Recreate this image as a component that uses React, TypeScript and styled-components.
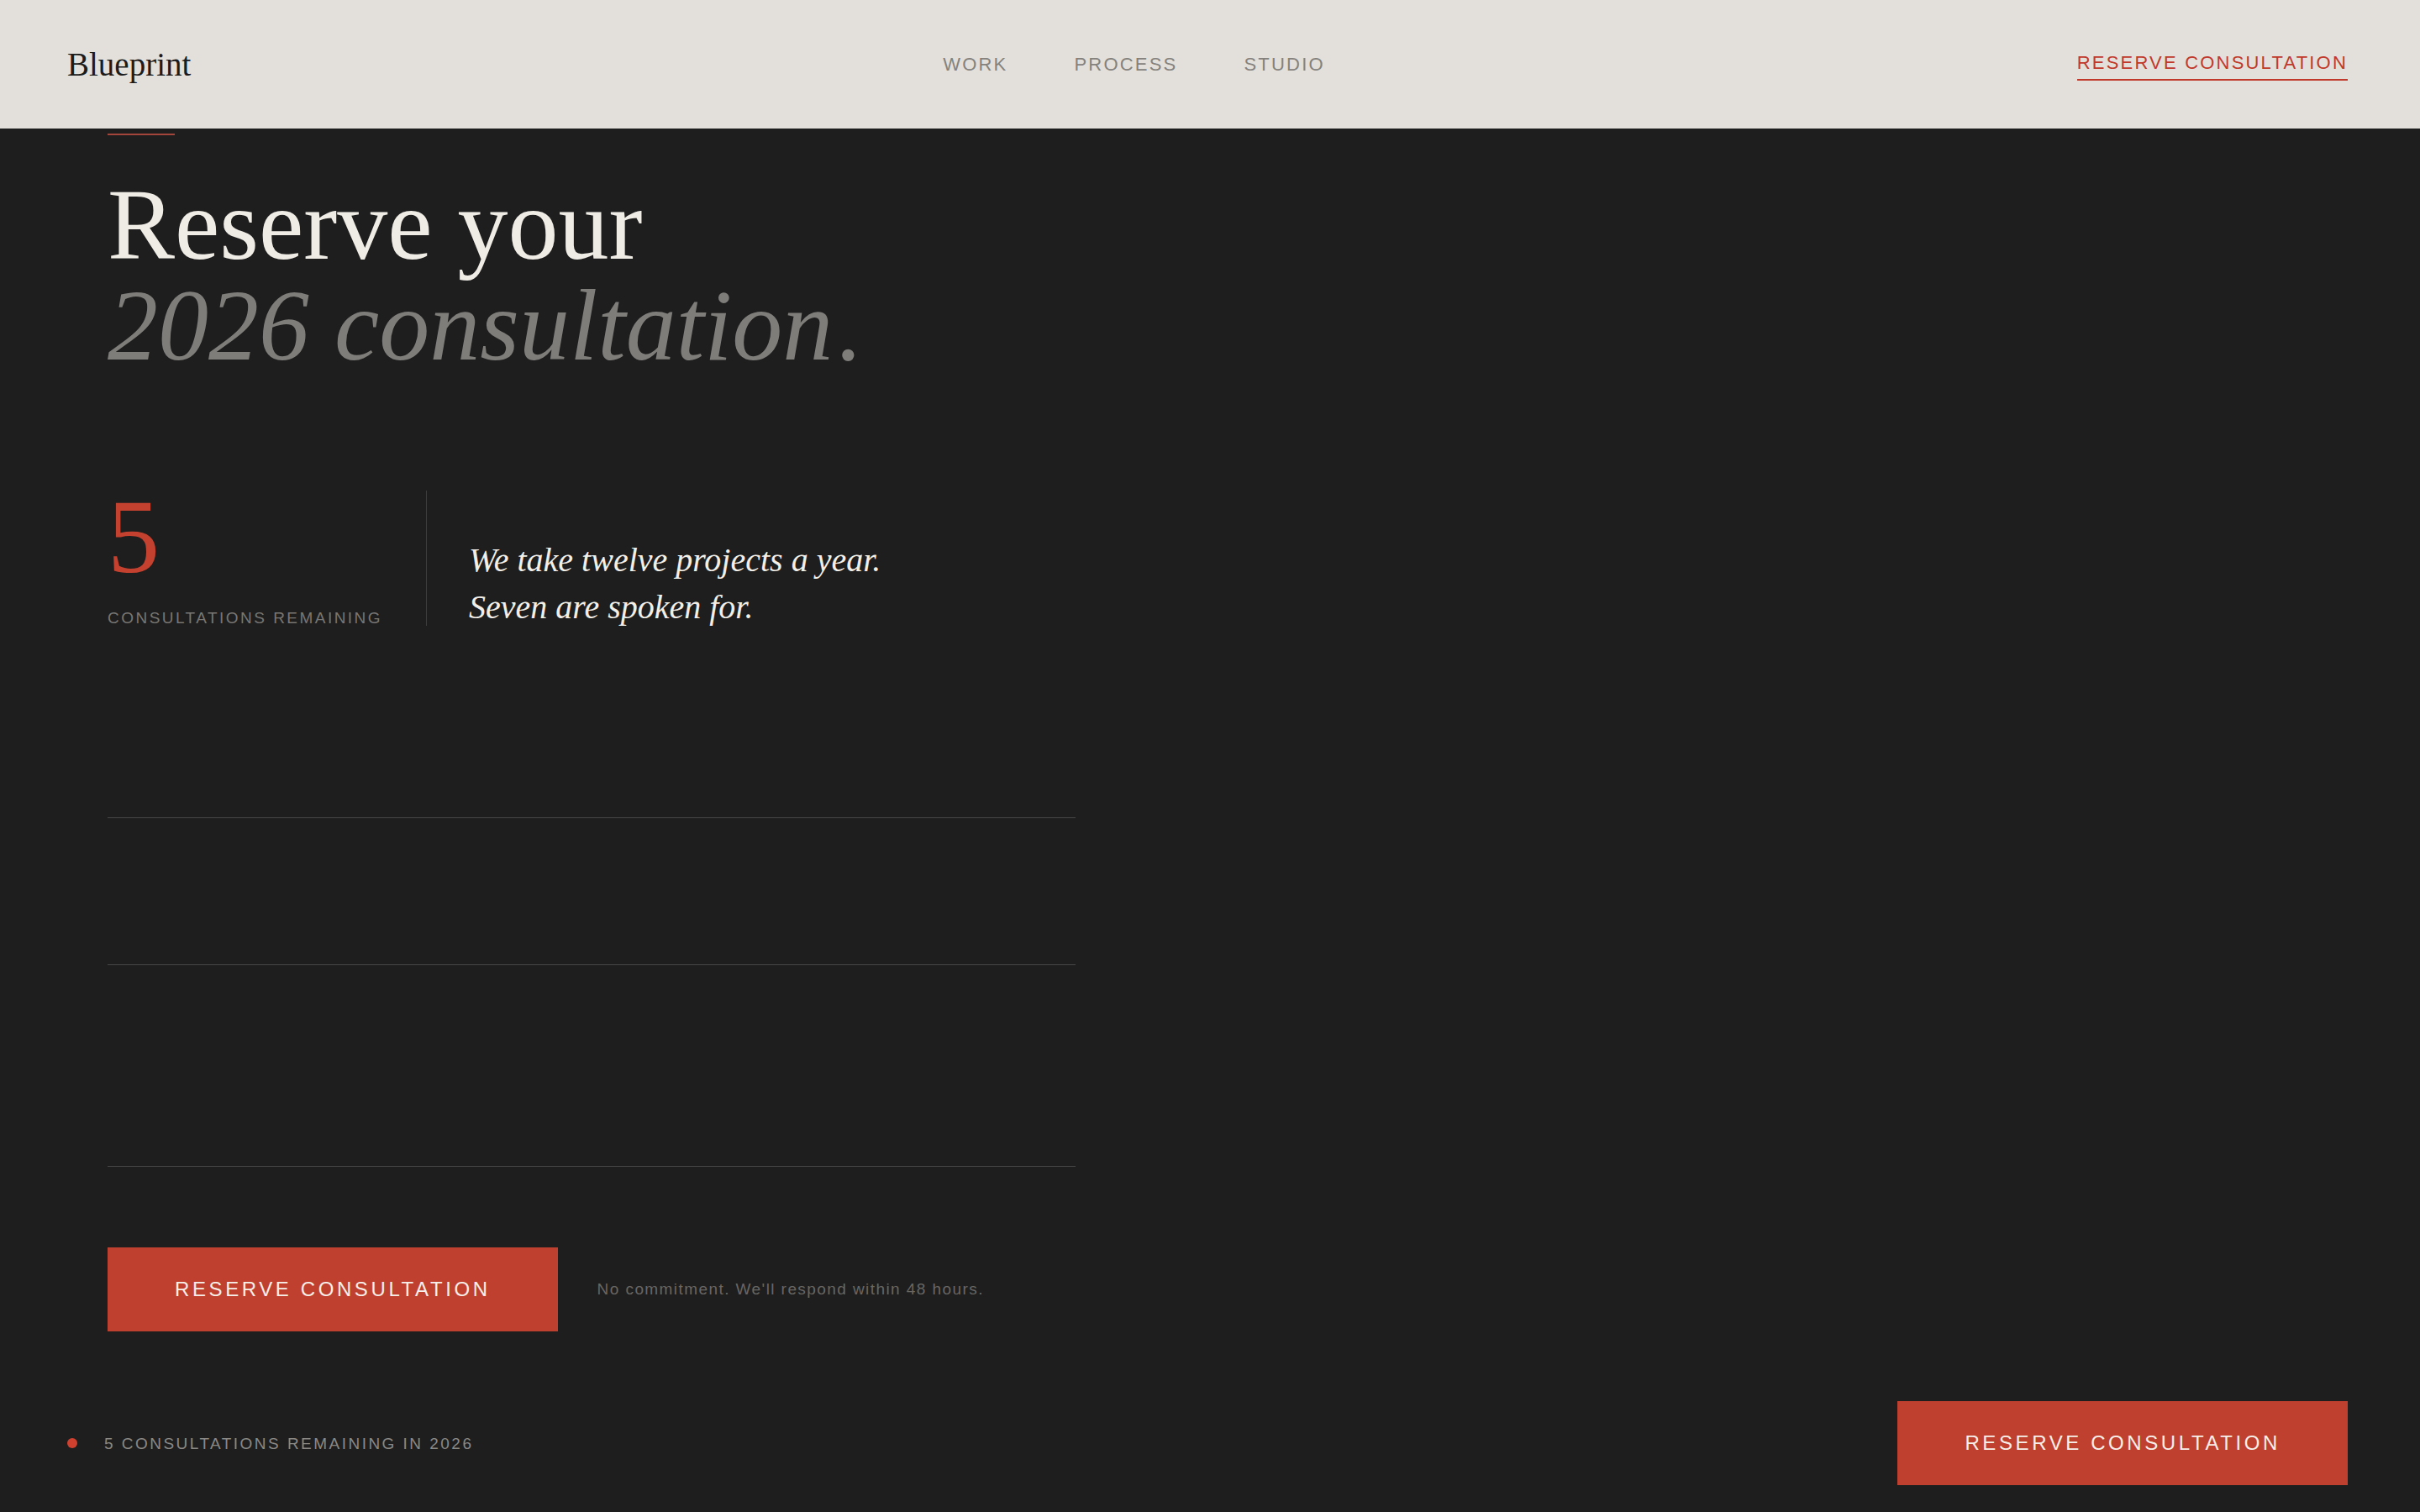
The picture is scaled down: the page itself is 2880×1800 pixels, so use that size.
import React from "react";
import styled, { createGlobalStyle } from "styled-components";

const serif = `"Liberation Serif", "Times New Roman", serif`;
const sans = `"Liberation Sans", Arial, sans-serif`;

const GlobalStyle = createGlobalStyle`
  html, body {
    margin: 0;
    padding: 0;
    background: #1e1e1e;
  }
  * {
    box-sizing: border-box;
  }
`;

const Page = styled.div`
  min-height: 100vh;
  display: flex;
  flex-direction: column;
  background: #1e1e1e;
`;

const Header = styled.header`
  height: 153px;
  flex-shrink: 0;
  display: flex;
  align-items: center;
  justify-content: space-between;
  padding: 0 86px 0 80px;
  background: #e3e0db;
`;

const Logo = styled.div`
  font-family: ${serif};
  font-size: 39px;
  line-height: 1;
  color: #1c1c1c;
`;

const Nav = styled.nav`
  display: flex;
  gap: 79px;
`;

const NavLink = styled.a`
  font-family: ${sans};
  font-size: 22px;
  line-height: 1;
  letter-spacing: 0.1em;
  color: #85827d;
  text-decoration: none;
`;

const HeaderCta = styled.a`
  display: inline-block;
  margin-top: 6px;
  padding-bottom: 8px;
  border-bottom: 2px solid #c0392b;
  font-family: ${sans};
  font-size: 22px;
  line-height: 22px;
  letter-spacing: 0.1em;
  color: #c0392b;
  text-decoration: none;
`;

const Main = styled.main`
  flex: 1;
  padding: 6px 86px 0 128px;
`;

const AccentLine = styled.div`
  width: 80px;
  height: 2px;
  background: #a4453c;
  margin-bottom: 47px;
`;

const Headline = styled.h1`
  margin: 0;
  font-family: ${serif};
  font-weight: 400;
  font-size: 120px;
  line-height: 1;
  color: #efebe5;

  em {
    display: block;
    color: #7f7d7a;
  }

  span {
    margin-left: 6px;
  }
`;

const StatsRow = styled.div`
  margin-top: 136px;
  display: flex;
  align-items: flex-end;
`;

const StatBlock = styled.div`
  display: flex;
  flex-direction: column;
  padding-right: 52px;
  border-right: 1px solid #3d3d3d;
`;

const StatNumber = styled.div`
  font-family: ${serif};
  font-size: 124px;
  line-height: 0.9;
  color: #c4402f;
`;

const SmallCaps = styled.div<{ $color?: string; $spacing?: string }>`
  font-family: ${sans};
  font-size: 19px;
  line-height: 1;
  letter-spacing: ${(p) => p.$spacing || "0.13em"};
  color: ${(p) => p.$color || "#787672"};
  text-transform: uppercase;
`;

const StatLabel = styled(SmallCaps)`
  margin-top: 30px;
`;

const Quote = styled.p`
  margin: 0 0 -6px 0;
  padding-left: 50px;
  font-family: ${serif};
  font-style: italic;
  font-size: 40px;
  line-height: 56px;
  color: #f2eee8;
`;

const Form = styled.form`
  margin-top: 101px;
  width: 1152px;
  display: flex;
  flex-direction: column;
  gap: 47px;
`;

const Field = styled.label<{ $height: number }>`
  display: flex;
  height: ${(p) => p.$height}px;
  border-bottom: 1px solid #474747;
`;

const Input = styled.input`
  flex: 1;
  align-self: flex-end;
  height: 60px;
  background: transparent;
  border: none;
  outline: none;
  font-family: ${serif};
  font-size: 32px;
  color: #efebe5;
`;

const TextArea = styled.textarea`
  flex: 1;
  align-self: flex-end;
  height: 120px;
  background: transparent;
  border: none;
  outline: none;
  resize: none;
  font-family: ${serif};
  font-size: 32px;
  color: #efebe5;
`;

const Actions = styled.div`
  margin-top: 96px;
  display: flex;
  align-items: center;
  gap: 47px;
`;

const Button = styled.button`
  height: 100px;
  padding: 0 80px;
  background: #c0402f;
  border: none;
  border-radius: 0;
  font-family: ${sans};
  font-size: 24px;
  letter-spacing: 0.15em;
  color: #f6eee8;
  cursor: pointer;
  white-space: nowrap;
`;

const Note = styled.span`
  font-family: ${sans};
  font-size: 19px;
  letter-spacing: 0.075em;
  color: #686663;
`;

const BottomBar = styled.footer`
  flex-shrink: 0;
  display: flex;
  align-items: center;
  justify-content: space-between;
  padding: 32px 86px 32px 80px;
`;

const Availability = styled.div`
  display: flex;
  align-items: center;
  gap: 32px;
`;

const Dot = styled.span`
  width: 12px;
  height: 12px;
  border-radius: 50%;
  background: #d0402f;
`;

export default function App() {
  return (
    <>
      <GlobalStyle />
      <Page>
        <Header>
          <Logo>Blueprint</Logo>
          <Nav>
            <NavLink href="#work">WORK</NavLink>
            <NavLink href="#process">PROCESS</NavLink>
            <NavLink href="#studio">STUDIO</NavLink>
          </Nav>
          <HeaderCta href="#reserve">RESERVE CONSULTATION</HeaderCta>
        </Header>

        <Main>
          <AccentLine />
          <Headline>
            Reserve your
            <em>
              2026 consultation<span>.</span>
            </em>
          </Headline>

          <StatsRow>
            <StatBlock>
              <StatNumber>5</StatNumber>
              <StatLabel>Consultations remaining</StatLabel>
            </StatBlock>
            <Quote>
              We take twelve projects a year.
              <br />
              Seven are spoken for.
            </Quote>
          </StatsRow>

          <Form onSubmit={(e) => e.preventDefault()}>
            <Field $height={128}>
              <Input type="text" aria-label="Name" />
            </Field>
            <Field $height={128}>
              <Input type="email" aria-label="Email" />
            </Field>
            <Field $height={193}>
              <TextArea aria-label="Project" />
            </Field>
          </Form>

          <Actions>
            <Button type="button">RESERVE CONSULTATION</Button>
            <Note>No commitment. We'll respond within 48 hours.</Note>
          </Actions>
        </Main>

        <BottomBar>
          <Availability>
            <Dot />
            <SmallCaps $color="#8a8884" $spacing="0.13em">
              5 consultations remaining in 2026
            </SmallCaps>
          </Availability>
          <Button type="button">RESERVE CONSULTATION</Button>
        </BottomBar>
      </Page>
    </>
  );
}
